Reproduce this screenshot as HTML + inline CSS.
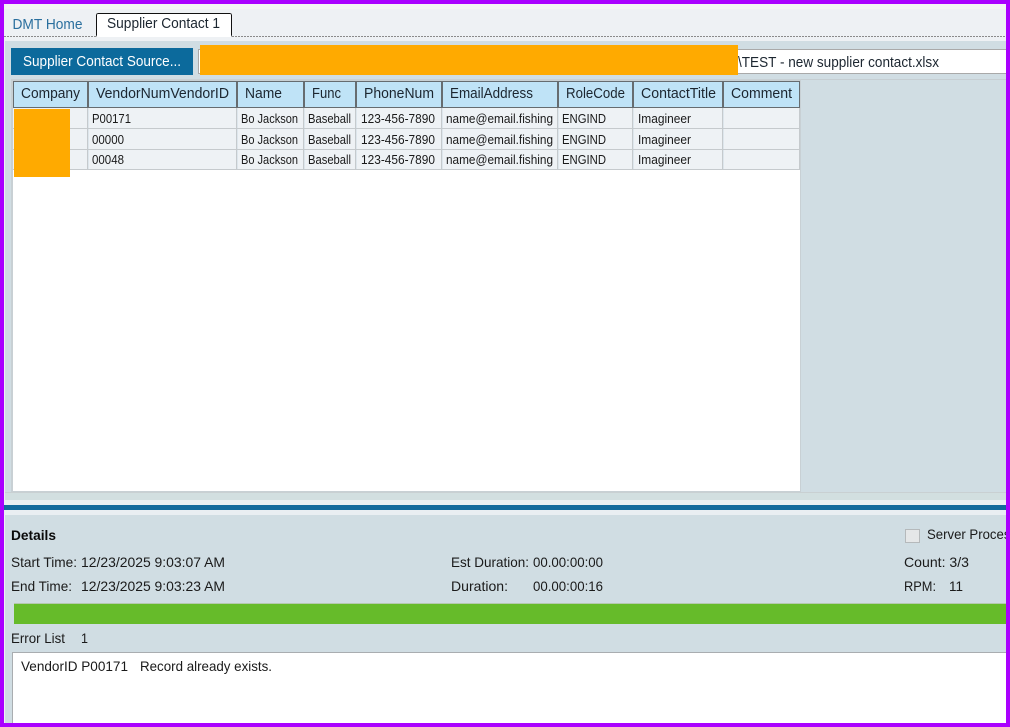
<!DOCTYPE html>
<html><head><meta charset="utf-8"><style>
html,body{margin:0;padding:0;background:#fff}
body{width:1010px;height:727px;overflow:hidden;position:relative}
svg{position:absolute;left:0;top:0;display:block}
text{font-family:"Liberation Sans",sans-serif;fill:#1a1a1a}
.h{font-size:14.5px;fill:#1c2630}
.c{font-size:12.5px;fill:#1a1a1a}
.t{font-size:14px;fill:#1a1a1a}
</style></head><body>
<svg width="1010" height="727" viewBox="0 0 1010 727" xmlns="http://www.w3.org/2000/svg" shape-rendering="crispEdges">
<rect width="1010" height="727" fill="#eef1f4"/>
<rect x="4" y="4" width="1002" height="5" fill="#f4f4f4"/>
<!-- tabs -->
<line x1="4" y1="36.5" x2="1006" y2="36.5" stroke="#8a8a8a" stroke-dasharray="2 1"/>
<rect x="96.5" y="13.5" width="135" height="23" fill="#fff" stroke="#111" rx="2"/>
<rect x="97" y="34" width="134" height="3" fill="#fff"/>
<text x="12.5" y="29" font-size="14.5" style="fill:#2a6f9e" textLength="70" lengthAdjust="spacingAndGlyphs">DMT Home</text>
<text x="107" y="28" font-size="14.5" style="fill:#1c2630" textLength="113" lengthAdjust="spacingAndGlyphs">Supplier Contact 1</text>
<!-- main panel -->
<rect x="5" y="41" width="1001" height="459" fill="#d0dde3"/>
<rect x="5" y="493" width="1001" height="7" fill="#d2dfe0"/>
<rect x="5" y="492" width="1001" height="1" fill="#c9d0d2"/>
<rect x="801" y="79" width="205" height="1" fill="#c6ced2"/>
<rect x="11" y="48" width="182" height="27" fill="#0c6a9c"/>
<text x="23" y="66" font-size="14.5" style="fill:#fff" textLength="158" lengthAdjust="spacingAndGlyphs">Supplier Contact Source...</text>
<rect x="198" y="49" width="808" height="25" fill="#fff"/>
<rect x="198" y="49" width="808" height="1" fill="#a9a9a9"/>
<rect x="198" y="73" width="808" height="1" fill="#a9a9a9"/>
<rect x="198" y="49" width="1" height="25" fill="#a9a9a9"/>
<text x="738" y="67" font-size="14.5" style="fill:#1c2630" textLength="201" lengthAdjust="spacingAndGlyphs">\TEST - new supplier contact.xlsx</text>
<!-- grid -->
<rect x="11" y="79" width="790" height="413" fill="#c8d0d4"/>
<rect x="13" y="81" width="787" height="410" fill="#fff"/>
<rect x="13" y="81" width="787" height="27" fill="#bfe3f7"/>
<g fill="#666c70">
<rect x="13" y="81" width="787" height="1"/><rect x="13" y="107" width="787" height="1"/>
<rect x="13" y="81" width="1" height="27"/>
<rect x="87" y="81" width="2" height="27"/><rect x="236" y="81" width="2" height="27"/><rect x="303" y="81" width="2" height="27"/><rect x="355" y="81" width="2" height="27"/><rect x="441" y="81" width="2" height="27"/><rect x="557" y="81" width="2" height="27"/><rect x="632" y="81" width="2" height="27"/><rect x="722" y="81" width="2" height="27"/><rect x="799" y="81" width="1" height="27"/>
</g>
<rect x="13" y="108" width="787" height="62" fill="#eef2f5"/>
<g fill="#dde6ec">
<rect x="88" y="108" width="1" height="62"/><rect x="237" y="108" width="1" height="62"/><rect x="304" y="108" width="1" height="62"/><rect x="356" y="108" width="1" height="62"/><rect x="442" y="108" width="1" height="62"/><rect x="558" y="108" width="1" height="62"/><rect x="633" y="108" width="1" height="62"/><rect x="723" y="108" width="1" height="62"/>
</g>
<g fill="#c5cacd">
<rect x="13" y="128" width="787" height="1"/><rect x="13" y="149" width="787" height="1"/><rect x="13" y="169" width="787" height="1"/>
<rect x="87" y="108" width="1" height="62"/><rect x="236" y="108" width="1" height="62"/><rect x="303" y="108" width="1" height="62"/><rect x="355" y="108" width="1" height="62"/><rect x="441" y="108" width="1" height="62"/><rect x="557" y="108" width="1" height="62"/><rect x="632" y="108" width="1" height="62"/><rect x="722" y="108" width="1" height="62"/><rect x="799" y="108" width="1" height="62"/>
</g>
<g class="hd">
<text class="h" x="21" y="98" textLength="59" lengthAdjust="spacingAndGlyphs">Company</text>
<text class="h" x="96" y="98" textLength="133" lengthAdjust="spacingAndGlyphs">VendorNumVendorID</text>
<text class="h" x="245" y="98" textLength="37" lengthAdjust="spacingAndGlyphs">Name</text>
<text class="h" x="312" y="98" textLength="29" lengthAdjust="spacingAndGlyphs">Func</text>
<text class="h" x="364" y="98" textLength="70" lengthAdjust="spacingAndGlyphs">PhoneNum</text>
<text class="h" x="450" y="98" textLength="83" lengthAdjust="spacingAndGlyphs">EmailAddress</text>
<text class="h" x="566" y="98" textLength="59" lengthAdjust="spacingAndGlyphs">RoleCode</text>
<text class="h" x="641" y="98" textLength="75" lengthAdjust="spacingAndGlyphs">ContactTitle</text>
<text class="h" x="731" y="98" textLength="61" lengthAdjust="spacingAndGlyphs">Comment</text>
</g>
<g>
<text class="c" x="92" y="123" textLength="39" lengthAdjust="spacingAndGlyphs">P00171</text>
<text class="c" x="92" y="144" textLength="32" lengthAdjust="spacingAndGlyphs">00000</text>
<text class="c" x="92" y="164" textLength="32" lengthAdjust="spacingAndGlyphs">00048</text>
<text class="c" x="241" y="123" textLength="57" lengthAdjust="spacingAndGlyphs">Bo Jackson</text>
<text class="c" x="241" y="144" textLength="57" lengthAdjust="spacingAndGlyphs">Bo Jackson</text>
<text class="c" x="241" y="164" textLength="57" lengthAdjust="spacingAndGlyphs">Bo Jackson</text>
<text class="c" x="308" y="123" textLength="43" lengthAdjust="spacingAndGlyphs">Baseball</text>
<text class="c" x="308" y="144" textLength="43" lengthAdjust="spacingAndGlyphs">Baseball</text>
<text class="c" x="308" y="164" textLength="43" lengthAdjust="spacingAndGlyphs">Baseball</text>
<text class="c" x="361" y="123" textLength="74" lengthAdjust="spacingAndGlyphs">123-456-7890</text>
<text class="c" x="361" y="144" textLength="74" lengthAdjust="spacingAndGlyphs">123-456-7890</text>
<text class="c" x="361" y="164" textLength="74" lengthAdjust="spacingAndGlyphs">123-456-7890</text>
<text class="c" x="446" y="123" textLength="107" lengthAdjust="spacingAndGlyphs">name@email.fishing</text>
<text class="c" x="446" y="144" textLength="107" lengthAdjust="spacingAndGlyphs">name@email.fishing</text>
<text class="c" x="446" y="164" textLength="107" lengthAdjust="spacingAndGlyphs">name@email.fishing</text>
<text class="c" x="562" y="123" textLength="44" lengthAdjust="spacingAndGlyphs">ENGIND</text>
<text class="c" x="562" y="144" textLength="44" lengthAdjust="spacingAndGlyphs">ENGIND</text>
<text class="c" x="562" y="164" textLength="44" lengthAdjust="spacingAndGlyphs">ENGIND</text>
<text class="c" x="638" y="123" textLength="53" lengthAdjust="spacingAndGlyphs">Imagineer</text>
<text class="c" x="638" y="144" textLength="53" lengthAdjust="spacingAndGlyphs">Imagineer</text>
<text class="c" x="638" y="164" textLength="53" lengthAdjust="spacingAndGlyphs">Imagineer</text>
</g>
<!-- redactions -->
<rect x="200" y="45" width="538" height="30" fill="#ffaa00"/>
<rect x="14" y="109" width="56" height="68" fill="#ffaa00"/>
<!-- splitter -->
<rect x="4" y="500" width="1002" height="5" fill="#e9eef2"/>
<rect x="4" y="505" width="1002" height="5" fill="#13699c"/>
<rect x="4" y="510" width="1002" height="5" fill="#e9eef2"/>
<!-- details -->
<rect x="5" y="515" width="1001" height="208" fill="#d0dde3"/>
<text x="11" y="540" font-size="14" font-weight="bold" style="fill:#0a0a0a" textLength="45" lengthAdjust="spacingAndGlyphs">Details</text>
<text class="t" x="11" y="567" textLength="66" lengthAdjust="spacingAndGlyphs">Start Time:</text>
<text class="t" x="81" y="567" textLength="144" lengthAdjust="spacingAndGlyphs">12/23/2025 9:03:07 AM</text>
<text class="t" x="11" y="591" textLength="61" lengthAdjust="spacingAndGlyphs">End Time:</text>
<text class="t" x="81" y="591" textLength="144" lengthAdjust="spacingAndGlyphs">12/23/2025 9:03:23 AM</text>
<text class="t" x="451" y="567" textLength="78" lengthAdjust="spacingAndGlyphs">Est Duration:</text>
<text class="t" x="533" y="567" textLength="70" lengthAdjust="spacingAndGlyphs">00.00:00:00</text>
<text class="t" x="451" y="591" textLength="57" lengthAdjust="spacingAndGlyphs">Duration:</text>
<text class="t" x="533" y="591" textLength="70" lengthAdjust="spacingAndGlyphs">00.00:00:16</text>
<rect x="905.5" y="529.5" width="14" height="13" fill="#e5e7e8" stroke="#b5b9bb"/>
<text class="t" x="927" y="539" textLength="90" lengthAdjust="spacingAndGlyphs">Server Process</text>
<text class="t" x="904" y="567" textLength="65" lengthAdjust="spacingAndGlyphs">Count: 3/3</text>
<text class="t" x="904" y="591" textLength="32" lengthAdjust="spacingAndGlyphs">RPM:</text>
<text class="t" x="949" y="591" textLength="14" lengthAdjust="spacingAndGlyphs">11</text>
<rect x="14" y="603" width="992" height="21" fill="#66bb2a"/>
<rect x="14" y="603" width="992" height="1" fill="#b5c9ae"/>
<text class="t" x="11" y="643" textLength="54" lengthAdjust="spacingAndGlyphs">Error List</text>
<text class="t" x="81" y="643" textLength="7" lengthAdjust="spacingAndGlyphs">1</text>
<rect x="12" y="652" width="994" height="71" fill="#fff"/>
<rect x="12" y="652" width="994" height="1" fill="#a9adb0"/>
<rect x="12" y="652" width="1" height="71" fill="#a9adb0"/>
<text class="t" x="21" y="671" textLength="107" lengthAdjust="spacingAndGlyphs">VendorID P00171</text>
<text class="t" x="140" y="671" textLength="132" lengthAdjust="spacingAndGlyphs">Record already exists.</text>
<!-- frame -->
<rect x="0" y="0" width="1010" height="4" fill="#aa00ff"/>
<rect x="0" y="723" width="1010" height="4" fill="#aa00ff"/>
<rect x="0" y="0" width="4" height="727" fill="#aa00ff"/>
<rect x="1006" y="0" width="4" height="727" fill="#aa00ff"/>
</svg>
</body></html>
